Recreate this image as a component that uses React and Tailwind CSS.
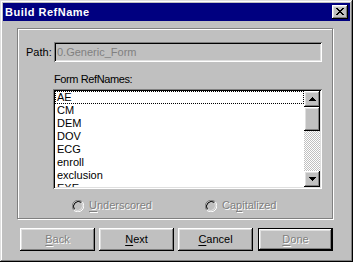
import React from "react";

const btnShadow =
  "shadow-[inset_-1px_-1px_0_#000,inset_1px_1px_0_#fff,inset_-2px_-2px_0_#808080,inset_2px_2px_0_#dfdfdf]";

function Radio() {
  return (
    <svg width="12" height="12" viewBox="0 0 12 12" className="shrink-0">
      <circle cx="6" cy="6" r="5" fill="#c0c0c0" />
      <path d="M1.76 10.24 A6 6 0 0 1 10.24 1.76" stroke="#808080" strokeWidth="1" fill="none" />
      <path d="M10.24 1.76 A6 6 0 0 1 1.76 10.24" stroke="#fff" strokeWidth="1" fill="none" />
      <path d="M2.5 9.5 A5 5 0 0 1 9.5 2.5" stroke="#000" strokeWidth="1" fill="none" />
      <path d="M9.5 2.5 A5 5 0 0 1 2.5 9.5" stroke="#dfdfdf" strokeWidth="1" fill="none" />
    </svg>
  );
}

function U({ children }) {
  return <span className="underline underline-offset-[2px] decoration-1">{children}</span>;
}

function Button({ children, disabled, isDefault }) {
  const inner = (
    <div
      className={`flex items-center justify-center bg-[#c0c0c0] ${btnShadow} ${
        isDefault ? "w-[73px] h-[21px]" : "w-[75px] h-[23px]"
      } ${disabled ? "text-[#808080] [text-shadow:1px_1px_0_#fff]" : "text-black"}`}
    >
      {children}
    </div>
  );
  if (isDefault) return <div className="border border-black">{inner}</div>;
  return inner;
}

const items = ["AE", "CM", "DEM", "DOV", "ECG", "enroll", "exclusion", "EXE"];

export default function App() {
  return (
    <div
      className="w-[353px] h-[262px] bg-[#c0c0c0] p-[3px] flex flex-col shadow-[inset_-1px_-1px_0_#000,inset_1px_1px_0_#dfdfdf,inset_-2px_-2px_0_#808080,inset_2px_2px_0_#fff] text-[11px] leading-[13px] text-black"
      style={{ fontFamily: '"Liberation Sans", Arial, sans-serif' }}
    >
      {/* Title bar */}
      <div className="h-[18px] bg-[#000080] flex items-center justify-between pl-[2px] pr-[2px]">
        <span className="text-white font-bold tracking-[0.5px]">Build RefName</span>
        <div className={`w-[16px] h-[14px] bg-[#c0c0c0] ${btnShadow} flex items-center justify-center`}>
          <svg width="8" height="7" viewBox="0 0 8 7" className="mt-[-1px]" shapeRendering="crispEdges">
            <path d="M0 0h2v1H0zM6 0h2v1H6zM1 1h2v1H1zM5 1h2v1H5zM2 2h4v1H2zM3 3h2v1H3zM2 4h4v1H2zM1 5h2v1H1zM5 5h2v1H5zM0 6h2v1H0zM6 6h2v1H6z" fill="#000" />
          </svg>
        </div>
      </div>

      {/* Group box */}
      <div className="ml-[14px] mt-[7px] w-[316px] h-[191px] border border-[#808080] shadow-[1px_1px_0_#fff,inset_1px_1px_0_#fff] flex flex-col">
        <div className="flex items-center mt-[13px]">
          <span className="ml-[8px] w-[28px]">Path:</span>
          <div className="w-[268px] h-[20px] bg-[#c0c0c0] shadow-[inset_1px_1px_0_#808080,inset_-1px_-1px_0_#fff,inset_2px_2px_0_#000,inset_-2px_-2px_0_#dfdfdf] flex items-center pl-[3px] text-[#808080]">
            0.Generic_Form
          </div>
        </div>
        <div className="ml-[36px] mt-[11px] tracking-[-0.4px]">Form RefNames:</div>
        <div className="ml-[35px] mt-[3px] w-[269px] h-[100px] bg-white p-[2px] shadow-[inset_1px_1px_0_#808080,inset_-1px_-1px_0_#fff,inset_2px_2px_0_#000,inset_-2px_-2px_0_#dfdfdf] flex">
          <div className="flex-1 overflow-hidden">
            {items.map((it, i) => (
              <div
                key={it}
                className={`h-[13px] pl-[2px] whitespace-nowrap ${
                  i === 0 ? "outline outline-1 outline-dotted outline-black -outline-offset-1" : ""
                }`}
              >
                {it}
              </div>
            ))}
          </div>
          <div className="w-[16px] flex flex-col">
            <div className={`h-[16px] bg-[#c0c0c0] ${btnShadow} flex items-center justify-center`}>
              <svg width="7" height="4" viewBox="0 0 7 4" shapeRendering="crispEdges">
                <path d="M3 0h1v1H3zM2 1h3v1H2zM1 2h5v1H1zM0 3h7v1H0z" fill="#000" />
              </svg>
            </div>
            <div className={`h-[24px] bg-[#c0c0c0] ${btnShadow}`} />
            <div className="flex-1 bg-[conic-gradient(#c0c0c0_25%,#fff_0_50%,#c0c0c0_0_75%,#fff_0)] bg-[length:2px_2px]" />
            <div className={`h-[16px] bg-[#c0c0c0] ${btnShadow} flex items-center justify-center`}>
              <svg width="7" height="4" viewBox="0 0 7 4" shapeRendering="crispEdges">
                <path d="M0 0h7v1H0zM1 1h5v1H1zM2 2h3v1H2zM3 3h1v1H3z" fill="#000" />
              </svg>
            </div>
          </div>
        </div>
        <div className="flex items-center mt-[10px] text-[#808080] [text-shadow:1px_1px_0_#fff]">
          <div className="ml-[54px] flex items-center gap-[5px]">
            <Radio />
            <span>
              <U>U</U>nderscored
            </span>
          </div>
          <div className="ml-[53px] flex items-center gap-[5px]">
            <Radio />
            <span>
              Ca<U>p</U>italized
            </span>
          </div>
        </div>
      </div>

      {/* Buttons */}
      <div className="flex ml-[17px] mt-[9px] gap-[4px] items-start">
        <Button disabled>
          <U>B</U>ack
        </Button>
        <Button>
          <U>N</U>ext
        </Button>
        <Button>
          <U>C</U>ancel
        </Button>
        <div className="ml-[1px]">
          <Button disabled isDefault>
            <U>D</U>one
          </Button>
        </div>
      </div>
    </div>
  );
}
